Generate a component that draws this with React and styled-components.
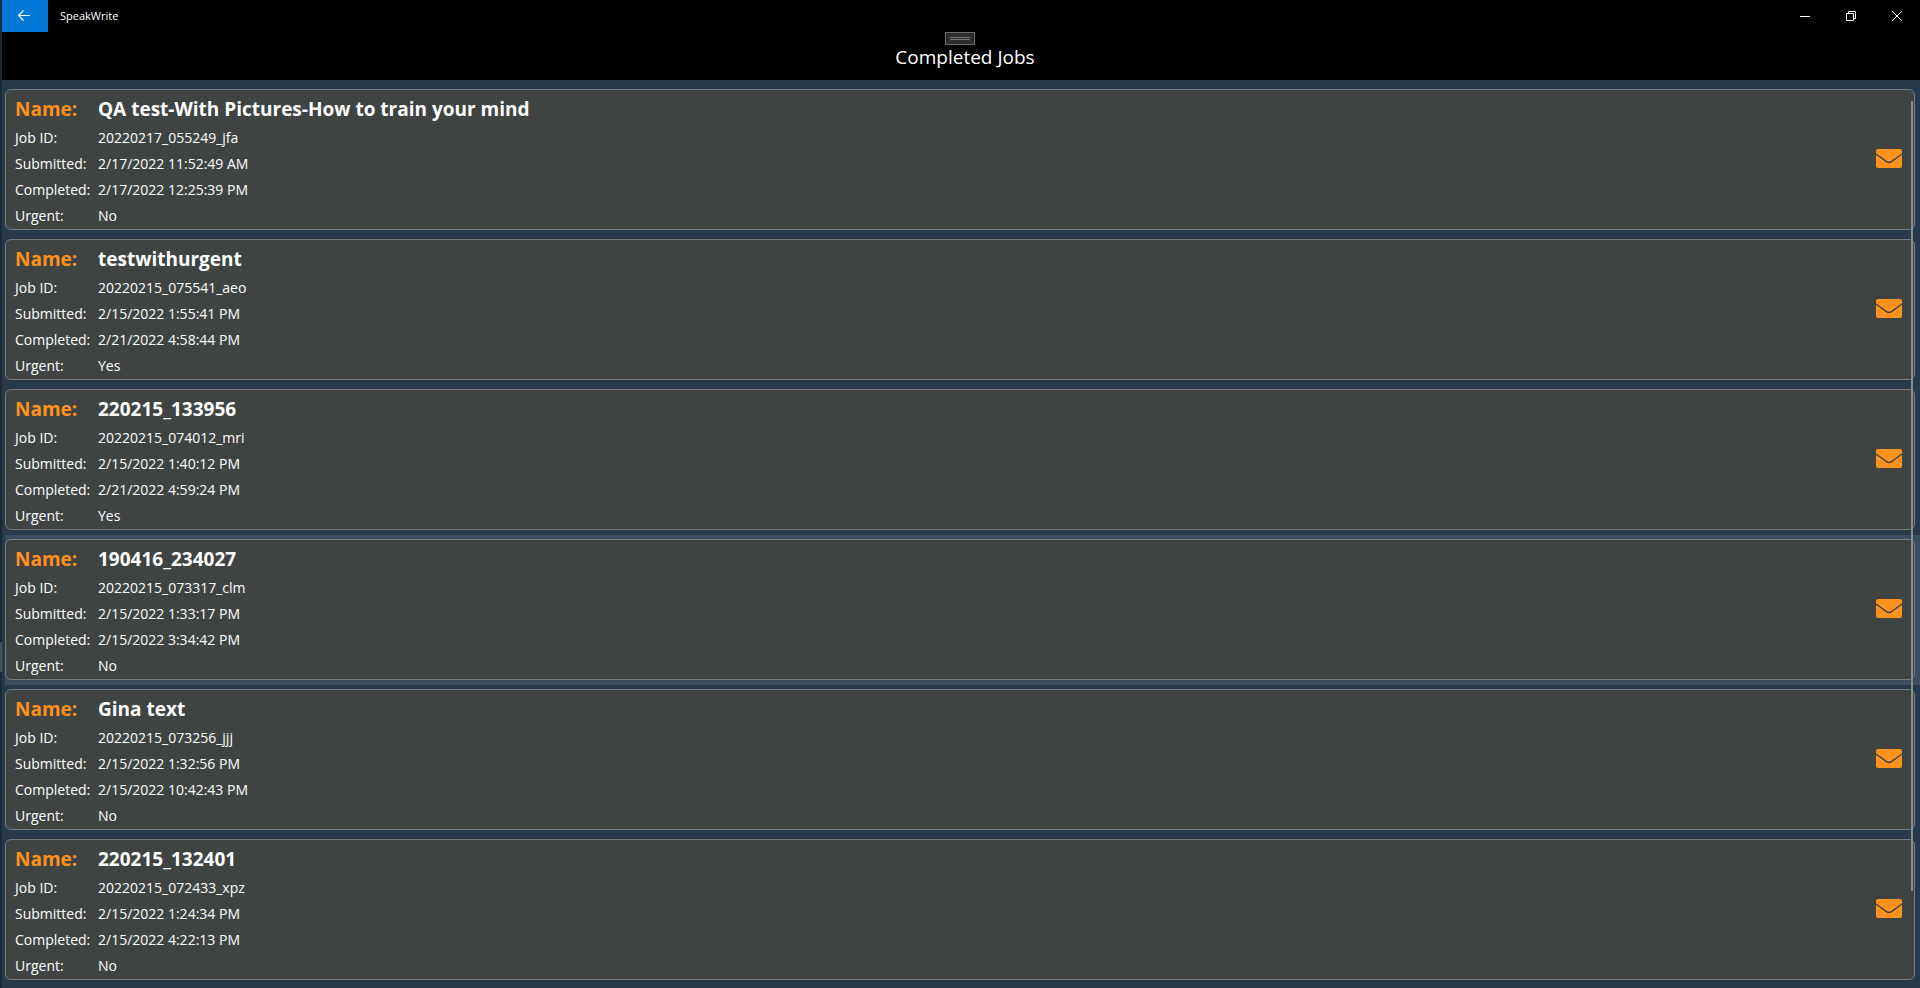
import React from "react";
import styled, { createGlobalStyle } from "styled-components";

const jobs = [
  {
    name: "QA test-With Pictures-How to train your mind",
    id: "20220217_055249_jfa",
    submitted: "2/17/2022 11:52:49 AM",
    completed: "2/17/2022 12:25:39 PM",
    urgent: false,
  },
  {
    name: "testwithurgent",
    id: "20220215_075541_aeo",
    submitted: "2/15/2022 1:55:41 PM",
    completed: "2/21/2022 4:58:44 PM",
    urgent: true,
  },
  {
    name: "220215_133956",
    id: "20220215_074012_mri",
    submitted: "2/15/2022 1:40:12 PM",
    completed: "2/21/2022 4:59:24 PM",
    urgent: true,
  },
  {
    name: "190416_234027",
    id: "20220215_073317_clm",
    submitted: "2/15/2022 1:33:17 PM",
    completed: "2/15/2022 3:34:42 PM",
    urgent: false,
    hovered: true,
  },
  {
    name: "Gina text",
    id: "20220215_073256_jjj",
    submitted: "2/15/2022 1:32:56 PM",
    completed: "2/15/2022 10:42:43 PM",
    urgent: false,
  },
  {
    name: "220215_132401",
    id: "20220215_072433_xpz",
    submitted: "2/15/2022 1:24:34 PM",
    completed: "2/15/2022 4:22:13 PM",
    urgent: false,
  },
];

const TitleBar = () => (
  <Bar>
    <BackButton type="button" aria-label="Back">
      <svg width="14" height="12" viewBox="0 0 14 12">
        <path d="M5.5 0.5 L0.5 5.5 L5.5 10.5 M0.5 5.5 H12" />
      </svg>
    </BackButton>
    <AppName>SpeakWrite</AppName>
    <WindowButton type="button" aria-label="Minimize">
      <svg width="10" height="10" viewBox="0 0 10 10">
        <path d="M0 5.5 H10" />
      </svg>
    </WindowButton>
    <WindowButton type="button" aria-label="Restore">
      <svg width="10" height="10" viewBox="0 0 10 10">
        <path d="M0.5 2.5 H7.5 V9.5 H0.5 Z M2.5 2.5 V0.5 H9.5 V7.5 H7.5" />
      </svg>
    </WindowButton>
    <WindowButton type="button" aria-label="Close">
      <svg width="10" height="10" viewBox="0 0 10 10">
        <path d="M0 0 L10 10 M10 0 L0 10" />
      </svg>
    </WindowButton>
  </Bar>
);

const JobItem = ({ job }) => (
  <Item $hovered={job.hovered}>
    <Card>
      <Details>
        <Label $heading>Name:</Label>
        <Value $heading>{job.name}</Value>
        <Label>Job ID:</Label>
        <Value>{job.id}</Value>
        <Label>Submitted:</Label>
        <Value>{job.submitted}</Value>
        <Label>Completed:</Label>
        <Value>{job.completed}</Value>
        <Label>Urgent:</Label>
        <Value>{job.urgent ? "Yes" : "No"}</Value>
      </Details>
      <MailButton type="button" aria-label={`Email ${job.name}`}>
        <svg width="26" height="19" viewBox="0 0 26 19">
          <rect width="26" height="19" rx="2" fill="#ff911e" />
          <path
            d="M0 5 L10.5 12.6 Q13 14.4 15.5 12.6 L26 5"
            fill="none"
            stroke="#3f4443"
            strokeWidth="1.3"
          />
        </svg>
      </MailButton>
    </Card>
  </Item>
);

const App = () => {
  return (
    <>
      <GlobalStyle />
      <Desktop>
        <DesktopEdge />
        <Window>
          <TitleBar />
          <Header>
            <Handle type="button" aria-label="Toggle toolbar">
              <svg width="20" height="3" viewBox="0 0 20 3">
                <path d="M0 0.5 H20 M0 2.5 H20" stroke="#777" />
              </svg>
            </Handle>
            <Title>Completed Jobs</Title>
          </Header>
          <ListArea>
            <List>
              {jobs.map((job) => (
                <JobItem key={job.id} job={job} />
              ))}
            </List>
            <ScrollThumb />
          </ListArea>
        </Window>
      </Desktop>
    </>
  );
};

export default App;

const GlobalStyle = createGlobalStyle`
  * {
    box-sizing: border-box;
  }
  body {
    margin: 0;
    background-color: #263a4b;
    color: #fff;
    font-family: "Open Sans", "Noto Sans", sans-serif;
  }
`;

const Desktop = styled.div`
  display: flex;
  min-height: 100vh;
`;

const DesktopEdge = styled.div`
  width: 2px;
  background: linear-gradient(
    #1c2a35 0,
    #22272b 65%,
    #4b5053 65%,
    #4b5053 68%,
    #1c2932 68%
  );
`;

const Window = styled.div`
  flex: 1;
  display: flex;
  flex-direction: column;
  min-width: 0;
`;

const Bar = styled.div`
  display: flex;
  align-items: center;
  height: 32px;
  background-color: #000;
`;

const BackButton = styled.button`
  display: flex;
  align-items: center;
  justify-content: center;
  width: 46px;
  height: 32px;
  padding: 0;
  border: 0;
  background-color: #0078d7;
  svg {
    fill: none;
    stroke: #fff;
    stroke-width: 1.2;
  }
`;

const AppName = styled.span`
  flex: 1;
  padding-left: 12px;
  font-size: 11px;
  line-height: 32px;
`;

const WindowButton = styled.button`
  display: flex;
  align-items: center;
  justify-content: center;
  width: 46px;
  height: 32px;
  padding: 0;
  border: 0;
  background-color: transparent;
  svg {
    fill: none;
    stroke: #fff;
    stroke-width: 1;
  }
`;

const Header = styled.header`
  display: flex;
  flex-direction: column;
  align-items: center;
  height: 48px;
  padding-right: 2px;
  background-color: #000;
`;

const Handle = styled.button`
  display: flex;
  align-items: center;
  justify-content: center;
  width: 30px;
  height: 13px;
  padding: 0;
  border: 1px solid #6a6a6a;
  background-color: #2b2b2b;
`;

const Title = styled.h1`
  margin: 0;
  padding-left: 10px;
  font-size: 19px;
  font-weight: 400;
  line-height: 24px;
`;

const ListArea = styled.main`
  position: relative;
  flex: 1;
  padding-top: 5px;
`;

const List = styled.ul`
  margin: 0;
  padding: 0 0 0 3px;
  list-style: none;
`;

const Item = styled.li`
  padding: 4px 5px 5px 0;
  background-color: ${({ $hovered }) => ($hovered ? "#3c4e5e" : "transparent")};
`;

const Card = styled.article`
  display: flex;
  align-items: center;
  justify-content: space-between;
  padding: 0 12px 0 9px;
  border: 1px solid #767b7b;
  border-radius: 6px;
  background-color: #3f4443;
`;

const Details = styled.dl`
  display: grid;
  grid-template-columns: 83px 1fr;
  margin: 0;
  padding-top: 3px;
`;

const Label = styled.dt`
  color: ${({ $heading }) => ($heading ? "#ff911e" : "#fff")};
  font-size: ${({ $heading }) => ($heading ? "19px" : "14px")};
  font-weight: ${({ $heading }) => ($heading ? 700 : 400)};
  line-height: ${({ $heading }) => ($heading ? "32px" : "26px")};
`;

const Value = styled.dd`
  margin: 0;
  font-size: ${({ $heading }) => ($heading ? "19px" : "14px")};
  font-weight: ${({ $heading }) => ($heading ? 700 : 400)};
  line-height: ${({ $heading }) => ($heading ? "32px" : "26px")};
`;

const MailButton = styled.button`
  display: flex;
  margin-bottom: 2px;
  padding: 0;
  border: 0;
  background-color: transparent;
`;

const ScrollThumb = styled.div`
  position: absolute;
  top: 21px;
  right: 7px;
  bottom: 97px;
  width: 2px;
  background-color: #8a8d8d;
`;
